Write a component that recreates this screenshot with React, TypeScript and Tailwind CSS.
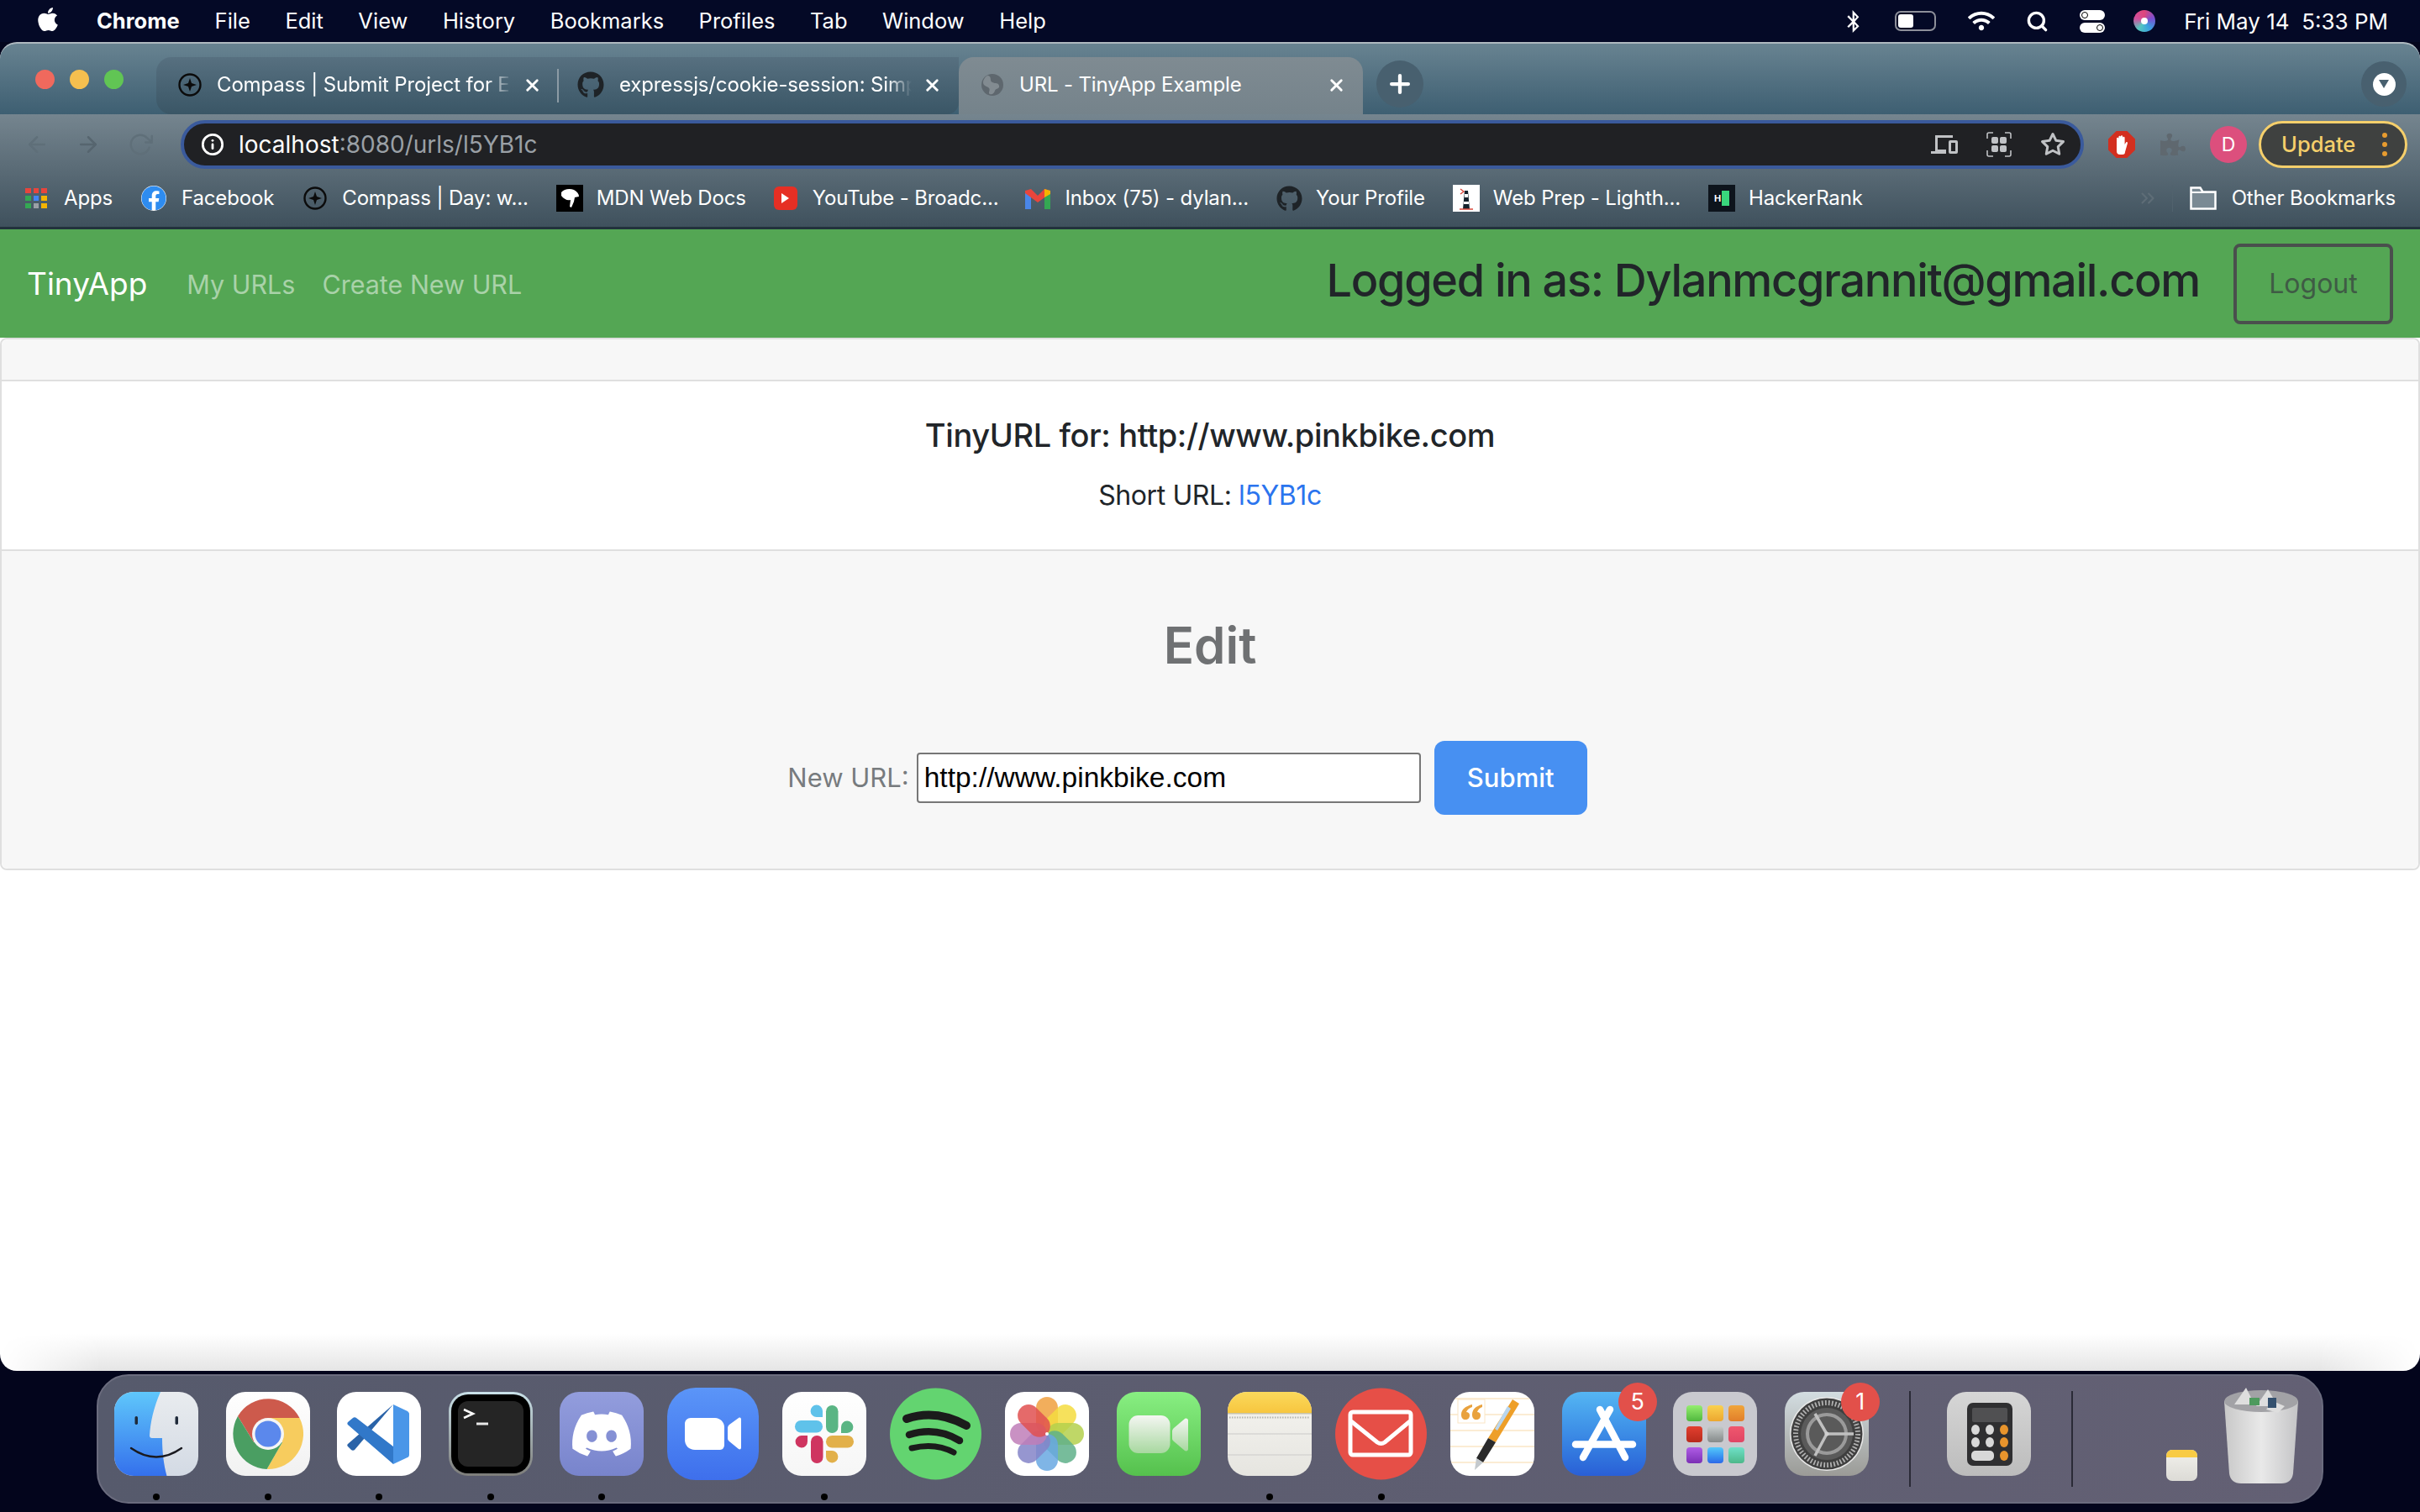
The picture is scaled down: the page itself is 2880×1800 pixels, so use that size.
import React from "react";
import { FaApple, FaDiscord, FaFacebook, FaGithub, FaPuzzlePiece, FaWifi } from "react-icons/fa";
import { FaBluetoothB } from "react-icons/fa";
import { FiSearch, FiX, FiPlus, FiArrowLeft, FiArrowRight, FiRotateCw, FiInfo, FiStar, FiChevronsRight } from "react-icons/fi";

const menuItems = ["File", "Edit", "View", "History", "Bookmarks", "Profiles", "Tab", "Window", "Help"];

const MenuBar = () => (
  <div className="h-[50px] flex items-center justify-between pl-[41px] pr-[38px] bg-[#040926] text-white text-[25.5px]">
    <div className="flex items-center">
      <FaApple size={32} className="mr-[42px] -mt-1" />
      <span className="font-bold mr-[42px]">Chrome</span>
      <div className="flex gap-[41.5px]">
        {menuItems.map((m) => (
          <span key={m}>{m}</span>
        ))}
      </div>
    </div>
    <div className="flex items-center">
      <FaBluetoothB size={27} className="mr-[36px]" />
      <div className="mr-[38px] w-[49px] h-[24px] rounded-[7px] border-2 border-[#8d8f99] p-[2px] flex">
        <div className="w-[18px] bg-white rounded-[3px]" />
      </div>
      <FaWifi size={32} className="mr-[37px]" />
      <FiSearch size={27} strokeWidth={3} className="mr-[37px]" />
      <div className="mr-[34px] w-[30px] flex flex-col gap-[3px]">
        <div className="h-[12px] rounded-full bg-white flex items-center pl-[2px]"><div className="w-[8px] h-[8px] rounded-full border border-black" /></div>
        <div className="h-[12px] rounded-full bg-white flex items-center justify-end pr-[2px]"><div className="w-[8px] h-[8px] rounded-full border border-black" /></div>
      </div>
      <div className="mr-[34px] w-[26px] h-[26px] rounded-full bg-[conic-gradient(#e0457b,#7a4fd0,#3aa0e0,#54c8c0,#d24f9c,#e0457b)] flex items-center justify-center">
        <div className="w-[8px] h-[8px] rounded-full bg-white" />
      </div>
      <span className="whitespace-pre text-[26px]">Fri May 14  5:33 PM</span>
    </div>
  </div>
);

const CompassIcon = ({ size = 28 }: { size?: number }) => (
  <svg width={size} height={size} viewBox="0 0 28 28" className="shrink-0">
    <circle cx="14" cy="14" r="12.5" fill="none" stroke="#0b0b0b" strokeWidth="2.4" />
    <path d="M14 6l2 6 6 2-6 2-2 6-2-6-6-2 6-2z" fill="#0b0b0b" />
  </svg>
);

const Tab = ({ width, icon, title, active, pad = "pl-[26px]", gap = "ml-[18px]" }: { width: string; icon: React.ReactNode; title: string; active?: boolean; pad?: string; gap?: string }) => (
  <div className={`${width} h-full flex items-center ${pad} pr-[20px] pb-[2px] shrink-0 ${active ? "bg-gradient-to-b from-[#7f8b92] to-[#75838b] rounded-t-[18px]" : ""}`}>
    {icon}
    <div className={`${gap} mr-[6px] flex-1 min-w-0 overflow-hidden whitespace-nowrap text-[24px] tracking-[-0.15px] text-white ${active ? "" : "[mask-image:linear-gradient(to_right,black_90%,transparent_98%)]"}`}>
      {title}
    </div>
    <FiX size={23} strokeWidth={3} className="text-white shrink-0" />
  </div>
);

const TabStrip = () => (
  <div className="h-[84px] pt-[16px] flex bg-gradient-to-b from-[#688391] to-[#3e5f72]">
    <div className="w-[186px] h-[52px] flex items-center gap-[18px] pl-[42px]">
      <div className="w-[23px] h-[23px] rounded-full bg-[#f0695d]" />
      <div className="w-[23px] h-[23px] rounded-full bg-[#f5bf4f]" />
      <div className="w-[23px] h-[23px] rounded-full bg-[#61c554]" />
    </div>
    <div className="flex bg-gradient-to-b from-[#577080] to-[#3a5666] rounded-tl-[18px] rounded-bl-[18px] rounded-br-[14px] relative">
      <Tab width="w-[479px]" icon={<CompassIcon />} title="Compass | Submit Project for E" />
      <div className="w-[2px] h-[40px] bg-[#8c9ba5] self-center -ml-[2px]" />
      <Tab width="w-[476px]" pad="pl-[22px]" gap="ml-[18px]" icon={<FaGithub size={32} className="text-[#1e2327] shrink-0" />} title="expressjs/cookie-session: Simp" />
    </div>
    <Tab width="w-[481px]" active icon={<svg width="28" height="28" viewBox="0 0 28 28" className="shrink-0"><circle cx="14" cy="14" r="13" fill="#5e676e" /><path d="M9 3c5 2 1 6 5 8s7 0 8 4-4 3-5 6-3 5-6 4 2-6-2-8-6-3-6-6 3-8 6-8z" fill="#828b91" /></svg>} title="URL - TinyApp Example" />
    <div className="ml-[16px] mt-[4px] w-[56px] h-[56px] rounded-full bg-[#48606f] flex items-center justify-center">
      <FiPlus size={34} strokeWidth={3} className="text-white" />
    </div>
    <div className="ml-auto mr-[16px] mt-[5px] w-[54px] h-[54px] rounded-full bg-[#48606f] flex items-center justify-center">
      <div className="w-[27px] h-[27px] rounded-full bg-white flex items-center justify-center">
        <div className="w-0 h-0 border-l-[6px] border-r-[6px] border-t-[10px] border-l-transparent border-r-transparent border-t-[#48606f]" />
      </div>
    </div>
  </div>
);

const Toolbar = () => (
  <div className="h-[72px] pt-[7px] flex">
    <div className="w-[215px] h-[58px] flex items-center text-[#5f6f79] shrink-0">
      <FiArrowLeft size={30} className="ml-[29px]" />
      <FiArrowRight size={30} className="ml-[31px] text-[#56656f]" />
      <FiRotateCw size={30} className="ml-[32px]" />
    </div>
    <div className="w-[2265px] h-[58px] rounded-full border-[4px] border-[#3a5a9c] bg-[#202124] flex items-center pl-[20px] pr-[18px] text-[28px]">
      <FiInfo size={28} strokeWidth={2.4} className="text-white" />
      <span className="ml-[17px] text-white">localhost</span>
      <span className="text-[#9aa0a6]">:8080/urls/l5YB1c</span>
      <div className="ml-auto flex items-center gap-[34px] text-[#c0c2c5]">
        <svg width="32" height="28" viewBox="0 0 32 28"><path d="M5 3h21v3H8v14h10v5H0v-3h5z" fill="#c0c2c5" /><rect x="21" y="9" width="11" height="16" rx="2" fill="#c0c2c5" /><rect x="24" y="12" width="5" height="10" fill="#202124" /></svg>
        <svg width="30" height="30" viewBox="0 0 30 30" fill="none"><path d="M1 8V3a2 2 0 012-2h5M22 1h5a2 2 0 012 2v5M29 22v5a2 2 0 01-2 2h-5M8 29H3a2 2 0 01-2-2v-5" stroke="#c0c2c5" strokeWidth="1.6" /><rect x="6" y="6" width="8" height="8" rx="2" fill="#c0c2c5" /><rect x="16" y="6" width="8" height="8" rx="2" fill="#c0c2c5" /><rect x="6" y="16" width="8" height="8" rx="2" fill="#c0c2c5" /><rect x="16" y="16" width="8" height="8" rx="2" fill="#c0c2c5" /></svg>
        <FiStar size={30} strokeWidth={2.4} />
      </div>
    </div>
    <div className="flex items-center h-[58px] ml-[29px]">
      <div className="w-[32px] h-[32px] bg-[#d32f1f] [clip-path:polygon(30%_0,70%_0,100%_30%,100%_70%,70%_100%,30%_100%,0_70%,0_30%)] flex items-center justify-center">
        <svg width="18" height="24" viewBox="0 0 18 24"><path d="M3 12V5a1.2 1.2 0 012.4 0V3a1.2 1.2 0 012.4 0v-.5a1.2 1.2 0 012.4 0V4a1.2 1.2 0 012.4 0v8l1.5-2.5c1-1 2.4 0 1.8 1.2L13 21a3 3 0 01-3 3H7a4 4 0 01-4-4z" fill="#fff" /></svg>
      </div>
      <FaPuzzlePiece size={30} className="ml-[30px] text-[#5f686f]" />
      <div className="ml-[29px] w-[44px] h-[44px] rounded-full bg-[#dc4f7d] text-white text-[23px] flex items-center justify-center">D</div>
      <div className="ml-[14px] w-[177px] h-[56px] rounded-full border-[3px] border-[#f5cf6b] bg-[#3f4140] flex items-center pl-[24px] pr-[21px] text-[#f5cf6b] text-[25.5px] font-medium">
        Update
        <div className="ml-auto flex flex-col gap-[5px]">
          <div className="w-[6px] h-[6px] rounded-full bg-[#e89c2f]" />
          <div className="w-[6px] h-[6px] rounded-full bg-[#e89c2f]" />
          <div className="w-[6px] h-[6px] rounded-full bg-[#e89c2f]" />
        </div>
      </div>
    </div>
  </div>
);

const bookmarkIcon = {
  apps: (
    <div className="grid grid-cols-3 gap-[3px] w-[26px]">
      {["#e8453c", "#e8453c", "#e8453c", "#34a853", "#4285f4", "#f5b400", "#34a853", "#9aa0a6", "#f5b400"].map((c, i) => (
        <div key={i} className="h-[6px]" style={{ backgroundColor: c }} />
      ))}
    </div>
  ),
  facebook: <FaFacebook size={30} className="text-[#2e8cf0] bg-white rounded-full" />,
  mdn: (
    <div className="w-[32px] h-[32px] bg-black flex items-center justify-center">
      <svg width="24" height="26" viewBox="0 0 24 26"><path d="M2 6c3-4 10-5 15-3 4 2 6 5 6 8l-5 1-1 5-3 7-2-1 1-8c-4 1-8-1-11-5z" fill="#fff" /></svg>
    </div>
  ),
  youtube: (
    <div className="w-[28px] h-[28px] rounded-[6px] bg-[#e62f24] flex items-center justify-center">
      <div className="w-0 h-0 border-y-[6px] border-l-[9px] border-y-transparent border-l-white" />
    </div>
  ),
  gmail: (
    <svg width="30" height="26" viewBox="0 0 30 26"><path d="M0 4v22h7V11z" fill="#4a86e8" /><path d="M30 4v22h-7V11z" fill="#34a853" /><path d="M0 4l7-2 8 8 8-8 7 2v3L15 18 0 7z" fill="#e8453c" /><path d="M23 2l7 2v4l-7 4z" fill="#f5b400" /></svg>
  ),
  github: <FaGithub size={31} className="text-[#1e2327]" />,
  lighthouse: (
    <div className="w-[32px] h-[32px] bg-white flex items-center justify-center">
      <svg width="16" height="30" viewBox="0 0 16 30"><path d="M6 6h4l2 22H4z" fill="#15222c" /><path d="M6 10h4v4H6zM5 19h6v3H5z" fill="#fff" /><path d="M1 4l4 3-4 3M0 28h16" stroke="#d9483b" strokeWidth="1.4" fill="none" /></svg>
    </div>
  ),
  hacker: (
    <div className="w-[32px] h-[32px] bg-[#0d141c] flex items-center justify-center gap-[1px]">
      <span className="text-white text-[11px] font-bold leading-none">H</span>
      <div className="w-[9px] h-[18px] bg-[#39d67c]" />
    </div>
  ),
};

const Bookmark = ({ icon, label, iconBox, gap, ml }: { icon: React.ReactNode; label: string; iconBox: string; gap: string; ml: string }) => (
  <div className={`flex items-center shrink-0 ${ml}`}>
    <div className={`${iconBox} flex items-center justify-center`}>{icon}</div>
    <span className={`${gap} text-white text-[24px] tracking-[-0.15px] whitespace-nowrap`}>{label}</span>
  </div>
);

const BookmarksBar = () => (
  <div className="h-[65px] flex items-center border-b-[3px] border-[#22323c] pb-[6px]">
    <div className="flex items-center pl-[30px] flex-1">
      <Bookmark ml="" iconBox="w-[26px]" gap="ml-[20px]" icon={bookmarkIcon.apps} label="Apps" />
      <Bookmark ml="ml-[34px]" iconBox="w-[30px]" gap="ml-[18px]" icon={bookmarkIcon.facebook} label="Facebook" />
      <Bookmark ml="ml-[35px]" iconBox="w-[28px]" gap="ml-[18px]" icon={<CompassIcon />} label="Compass | Day: w..." />
      <Bookmark ml="ml-[33px]" iconBox="w-[32px]" gap="ml-[16px]" icon={bookmarkIcon.mdn} label="MDN Web Docs" />
      <Bookmark ml="ml-[33px]" iconBox="w-[28px]" gap="ml-[18px]" icon={bookmarkIcon.youtube} label="YouTube - Broadc..." />
      <Bookmark ml="ml-[32px]" iconBox="w-[30px]" gap="ml-[17px]" icon={bookmarkIcon.gmail} label="Inbox (75) - dylan..." />
      <Bookmark ml="ml-[33px]" iconBox="w-[31px]" gap="ml-[16px]" icon={bookmarkIcon.github} label="Your Profile" />
      <Bookmark ml="ml-[33px]" iconBox="w-[32px]" gap="ml-[16px]" icon={bookmarkIcon.lighthouse} label="Web Prep - Lighth..." />
      <Bookmark ml="ml-[33px]" iconBox="w-[32px]" gap="ml-[16px]" icon={bookmarkIcon.hacker} label="HackerRank" />
    </div>
    <FiChevronsRight size={26} className="text-[#5e6d77] mr-[16px]" />
    <div className="w-[1px] h-[32px] bg-[#51626d] mr-[20px]" />
    <svg width="32" height="28" viewBox="0 0 32 28" className="mr-[18px]"><path d="M1.5 26.5V1.5h11l3 5h15v20z" fill="#7a8a94" stroke="#fff" strokeWidth="2.5" /><path d="M2 7h28" stroke="#fff" strokeWidth="2" /></svg>
    <span className="text-white text-[24px] tracking-[-0.15px] mr-[29px] whitespace-nowrap">Other Bookmarks</span>
  </div>
);

const SiteNav = () => (
  <nav className="h-[129px] bg-[#54a654] flex items-center pl-[32px] pr-[32px] shrink-0">
    <span className="text-white text-[37px]">TinyApp</span>
    <span className="ml-[47px] mt-[2px] text-[30.5px] text-[#a9d2a9]">My URLs</span>
    <span className="ml-[32px] mt-[2px] text-[30.5px] text-[#a9d2a9]">Create New URL</span>
    <span className="ml-auto text-[54px] tracking-[-1.3px] font-medium text-[#212529] -mt-[8px]">Logged in as: Dylanmcgrannit@gmail.com</span>
    <button className="ml-[40px] w-[190px] h-[96px] rounded-[8px] border-[4px] border-[#4a4f4d] text-[32px] text-[#3f5b45] flex items-center justify-center">Logout</button>
  </nav>
);

const UrlCard = () => (
  <div className="rounded-[8px] border-2 border-[#dfdfdf] bg-white shrink-0">
    <div className="h-[50px] bg-[#f7f7f7] border-b-2 border-[#dfdfdf] rounded-t-[8px]" />
    <div className="h-[202px] flex flex-col items-center border-b-2 border-[#dfdfdf]">
      <h5 className="mt-[40px] text-[38px] tracking-[-0.4px] leading-[48px] font-medium text-[#212529]">TinyURL for: http://www.pinkbike.com</h5>
      <p className="mt-[24px] text-[32px] tracking-[-0.4px] leading-[48px] text-[#212529]">
        Short URL: <a className="text-[#2b74ee]">l5YB1c</a>
      </p>
    </div>
    <div className="h-[378px] bg-[#f7f7f7] flex flex-col items-center rounded-b-[8px]">
      <h3 className="mt-[76px] text-[60px] leading-[72px] font-semibold text-[#6f7173]">Edit</h3>
      <div className="mt-[78px] pr-[54px] flex items-center">
        <label className="text-[31px] text-[#777b7e]">New URL:</label>
        <input readOnly value="http://www.pinkbike.com" className="ml-[9px] w-[600px] h-[60px] rounded-[4px] border-2 border-[#767676] bg-white px-[7px] text-[33.5px] text-black [font-family:'Liberation_Sans',Arial,sans-serif]" />
        <button className="ml-[16px] w-[182px] h-[88px] rounded-[12px] bg-[#4790f2] text-white text-[31px] font-medium">Submit</button>
      </div>
    </div>
  </div>
);

const Box = ({ children, className = "" }: { children: React.ReactNode; className?: string }) => (
  <div className={`w-[100px] h-[100px] rounded-[23px] overflow-hidden flex items-center justify-center ${className}`}>{children}</div>
);

const Svg = ({ children, size = 100 }: { children: React.ReactNode; size?: number }) => (
  <svg width={size} height={size} viewBox={`0 0 ${size} ${size}`} className="block">{children}</svg>
);

const Finder = () => (
  <Box className="bg-gradient-to-b from-[#e9ecef] to-[#d3dae4]">
    <Svg>
      <defs><linearGradient id="fb" x1="0" y1="0" x2="0" y2="1"><stop offset="0" stopColor="#5fc7fb" /><stop offset="1" stopColor="#3470ec" /></linearGradient></defs>
      <path d="M0 0h55C47 18 43 36 42 52c0 2 1 3 3 3h12c0 17 2 32 5.500 45H0z" fill="url(#fb)" />
      <rect x="24.500" y="29" width="3.500" height="10" rx="1.700" fill="#1f2a3a" />
      <rect x="72.500" y="29" width="3.500" height="10" rx="1.700" fill="#1f2a3a" />
      <path d="M20 67Q50 88 80 67" fill="none" stroke="#1a1a1f" strokeWidth="2.400" strokeLinecap="round" />
    </Svg>
  </Box>
);

const Chrome = () => (
  <Box className="bg-gradient-to-b from-white to-[#f1f1f1]">
    <Svg>
      <path d="M14 29A42 42 0 0 1 87.500 31H50L33 60z" fill="#cd5a4c" />
      <path d="M87.500 31A42 42 0 0 1 48.600 92L67 60 50 31z" fill="#f7cc5e" />
      <path d="M48.600 92A42 42 0 0 1 14 29L33 60 67 60z" fill="#4a9e62" />
      <circle cx="50" cy="50" r="19" fill="#f5f5f5" />
      <circle cx="50" cy="50" r="15.500" fill="#5b88ec" />
    </Svg>
  </Box>
);

const VsCode = () => (
  <Box className="bg-white">
    <Svg>
      <path d="M67 15 21 69c-1 1-3 1-4 0l-4-4c-1-1-1-2 0-3z" fill="#2a63a8" />
      <path d="M19 31c1-1 3-1 4 0l44 34v21L14 40c-2-1-2-3-1-4z" fill="#3178c9" />
      <path d="M67 15l17 8c1 1 2 2 2 3v49c0 1-1 3-2 3l-17 8z" fill="#4a96e8" />
    </Svg>
  </Box>
);

const Terminal = () => (
  <Box className="bg-gradient-to-b from-[#c8e0e8] to-[#7d7d7a] p-[3px]">
    <div className="w-full h-full rounded-[20px] bg-black p-[8px]">
      <div className="w-full h-full rounded-[12px] bg-[#252525] relative">
        <svg width="40" height="40" viewBox="0 0 40 40" className="absolute left-[4px] top-[2px]">
          <path d="M3 8l11 5-11 5" fill="none" stroke="#fff" strokeWidth="2.500" />
          <path d="M18 25h14" stroke="#e8e8e8" strokeWidth="3" />
        </svg>
      </div>
    </div>
  </Box>
);

const Discord = () => (
  <Box className="bg-gradient-to-b from-[#939ddd] to-[#7884cc]">
    <FaDiscord size={76} className="text-white" />
  </Box>
);

const Zoom = () => (
  <div className="w-[109px] h-[110px] rounded-[34px] bg-gradient-to-b from-[#5b95f8] to-[#3e6fec] flex items-center justify-center">
    <svg width="109" height="110" viewBox="0 0 109 110">
      <path d="M21 43c0-4 3-7 7-7h29c6 0 11 5 11 11v21c0 3-2 6-5 6H33c-7 0-12-5-12-12z" fill="#fff" />
      <path d="M72 48c0-2 1-3 2-4l11-8c2-1 3 0 3 2v33c0 2-1 3-3 2l-11-9c-1-1-2-2-2-4z" fill="#fff" />
    </svg>
  </div>
);

const Slack = () => (
  <Box className="bg-gradient-to-b from-white to-[#f6f6f6]">
    <Svg>
      <rect x="15" y="34" width="33" height="14.500" rx="7.200" fill="#5fc2ea" />
      <path d="M48 30h-7a7.200 7.200 0 1 1 7-7.200z" fill="#5fc2ea" />
      <rect x="52" y="16" width="14.500" height="33" rx="7.200" fill="#5ab584" />
      <path d="M70 49v-7a7.200 7.200 0 1 1 7.200 7z" fill="#5ab584" />
      <rect x="34" y="52" width="14.500" height="33" rx="7.200" fill="#cf3560" />
      <path d="M30 52v7a7.200 7.200 0 1 1-7.200-7z" fill="#cf3560" />
      <rect x="52" y="52" width="33" height="14.500" rx="7.200" fill="#e2b04a" />
      <path d="M52 70h7a7.200 7.200 0 1 1-7 7.200z" fill="#e2b04a" />
    </Svg>
  </Box>
);

const Spotify = () => (
  <svg width="109" height="110" viewBox="0 0 109 110" className="block">
    <circle cx="54.500" cy="55" r="54.500" fill="#63d470" />
    <path d="M20 37Q55 25 91 45" fill="none" stroke="#1b1b1b" strokeWidth="10" strokeLinecap="round" />
    <path d="M23 56Q55 46 83 63" fill="none" stroke="#1b1b1b" strokeWidth="8.500" strokeLinecap="round" />
    <path d="M26 72Q54 65 76 77" fill="none" stroke="#1b1b1b" strokeWidth="7" strokeLinecap="round" />
  </svg>
);

const petals = [
  { a: 0, c: "#f0a040" }, { a: 45, c: "#f4dc40" }, { a: 90, c: "#b4d04c" }, { a: 135, c: "#5fb08a" },
  { a: 180, c: "#68a8e2" }, { a: 225, c: "#8484c8" }, { a: 270, c: "#c07eb8" }, { a: 315, c: "#e05050" },
];

const Photos = () => (
  <Box className="bg-white">
    <Svg>
      {petals.map((p) => (
        <rect key={p.a} x="37" y="6" width="26" height="44" rx="13" fill={p.c} opacity="0.85" transform={`rotate(${p.a} 50 50)`} />
      ))}
      <circle cx="50" cy="50" r="2" fill="#fff" />
    </Svg>
  </Box>
);

const FaceTime = () => (
  <Box className="bg-gradient-to-b from-[#88ef82] to-[#55c14d]">
    <Svg>
      <defs><linearGradient id="ft" x1="0" y1="0" x2="0" y2="1"><stop offset="0" stopColor="#f4f6f2" /><stop offset="1" stopColor="#a8d8a0" /></linearGradient></defs>
      <rect x="14.500" y="28" width="49" height="45" rx="11" fill="url(#ft)" />
      <path d="M66 47c0-2 1-3 2-4l13-11c2-1 4 0 4 2v34c0 2-2 3-4 2L68 59c-1-1-2-2-2-3z" fill="url(#ft)" />
    </Svg>
  </Box>
);

const Notes = () => (
  <Box className="bg-gradient-to-b from-[#f5f4f0] to-[#e6e5e0]">
    <Svg>
      <defs><linearGradient id="nt" x1="0" y1="0" x2="0" y2="1"><stop offset="0" stopColor="#fbd95c" /><stop offset="1" stopColor="#f7c63f" /></linearGradient></defs>
      <rect width="100" height="25" fill="url(#nt)" />
      <rect y="25" width="100" height="1.500" fill="#c8c2a8" />
      <path d="M2 30.500H98" stroke="#b5b5b0" strokeWidth="2" strokeDasharray="1.500 1.500" />
      <path d="M0 50H100M0 75H100" stroke="#d6d5d2" strokeWidth="1.500" />
    </Svg>
  </Box>
);

const Mail = () => (
  <svg width="109" height="110" viewBox="0 0 109 110" className="block">
    <circle cx="54.500" cy="55" r="54.500" fill="#e64f47" />
    <rect x="18" y="29" width="72" height="51" rx="3" fill="none" stroke="#fff" strokeWidth="5" />
    <path d="M19 40l31 25c3 2 6 2 9 0l30-25" fill="none" stroke="#fff" strokeWidth="5" />
  </svg>
);

const Pages = () => (
  <Box className="bg-white">
    <Svg>
      <path d="M0 8H100M0 27H100M0 46H100M0 65H100M0 84H100" stroke="#fae6c6" strokeWidth="1.500" />
      <rect x="9" y="9" width="32" height="28" fill="#fff" stroke="#fae6c6" />
      <path d="M26 15c-8 2-13 6-13 12 0 4 2 6 5 6s5-2 5-5-2-4-4-4c1-3 4-5 7-6zM38 15c-8 2-12 6-12 12 0 4 2 6 5 6s5-2 5-5-2-4-4-4c1-3 3-5 6-6z" fill="#e9a23e" />
      <path d="M74 9 82 14 54 60 45 55z" fill="#ee9f28" />
      <path d="M68 17 72 20 56 46 53 44z" fill="#b9d6ee" />
      <path d="M45 55 54 60 39 84 31 79z" fill="#2a2a2a" />
      <path d="M31 79 39 84 29 93z" fill="#c4c9cd" />
    </Svg>
  </Box>
);

const AppStore = () => (
  <Box className="bg-gradient-to-b from-[#55b6f3] to-[#2a5fd6]">
    <Svg>
      <path d="M45 21 75 78M57 21 25 78M16 62.500H84" stroke="#fff" strokeWidth="8.500" strokeLinecap="round" fill="none" />
    </Svg>
  </Box>
);

const launchpadColors = [
  "bg-gradient-to-b from-[#95ee6f] to-[#4fb83e]", "bg-gradient-to-b from-[#fad14f] to-[#eca72f]", "bg-gradient-to-b from-[#f0a53b] to-[#e17e2a]",
  "bg-gradient-to-b from-[#e33f2f] to-[#b82a1c]", "bg-gradient-to-b from-[#c6cbcb] to-[#858a8a]", "bg-gradient-to-b from-[#f0576e] to-[#e04564]",
  "bg-gradient-to-b from-[#b05ce6] to-[#7b2fb5]", "bg-gradient-to-b from-[#55c8fa] to-[#2e68e8]", "bg-gradient-to-b from-[#6fe0c8] to-[#4db88a]",
];

const Launchpad = () => (
  <Box className="bg-[#c9c9cf]">
    <div className="grid grid-cols-3 gap-[6px]">
      {launchpadColors.map((c) => (
        <div key={c} className={`w-[19px] h-[19px] rounded-[4px] ${c}`} />
      ))}
    </div>
  </Box>
);

const SystemPrefs = () => (
  <Box className="bg-gradient-to-b from-[#d3dde1] to-[#9b9b97]">
    <Svg>
      <circle cx="50" cy="50" r="44" fill="#e8e8e8" />
      <circle cx="50" cy="50" r="42.500" fill="#3f3f3f" />
      <circle cx="50" cy="50" r="37" fill="none" stroke="#b0b0b0" strokeWidth="6" strokeDasharray="1.800 2.200" />
      <circle cx="50" cy="50" r="31" fill="#5a5a5a" />
      <circle cx="50" cy="50" r="23" fill="#5a5a5a" stroke="#9a9a9a" strokeWidth="4" />
      <path d="M50 50 36 26M50 50H82M50 50 36 76" stroke="#c0c0c0" strokeWidth="3.500" fill="none" />
      <circle cx="50" cy="50" r="2.500" fill="#d0d0d0" />
    </Svg>
  </Box>
);

const Calculator = () => (
  <Box className="bg-gradient-to-b from-[#d6d6d6] to-[#bcbcbc]">
    <Svg>
      <rect x="24" y="13" width="54" height="75" rx="7" fill="#2f2f31" />
      <rect x="30" y="19" width="42" height="17" rx="2" fill="#505052" />
      {[45, 60].map((y) => (
        <g key={y}>
          <ellipse cx="34" cy={y} rx="5" ry="6" fill="#d8d8d8" />
          <ellipse cx="51" cy={y} rx="5" ry="6" fill="#d8d8d8" />
          <ellipse cx="68" cy={y} rx="5" ry="6" fill="#e8942c" />
        </g>
      ))}
      <rect x="29" y="70" width="27" height="12" rx="5" fill="#d8d8d8" />
      <ellipse cx="68" cy="76" rx="5" ry="6" fill="#e8942c" />
    </Svg>
  </Box>
);

const Trash = () => (
  <svg width="88" height="116" viewBox="0 0 88 116" className="block">
    <defs><linearGradient id="tr" x1="0" y1="0" x2="1" y2="0"><stop offset="0" stopColor="#c8c8c8" /><stop offset="0.5" stopColor="#e9e9e9" /><stop offset="1" stopColor="#c4c4c6" /></linearGradient></defs>
    <path d="M0 18h88l-6 86c-1 8-6 12-14 12H20c-8 0-13-4-14-12z" fill="url(#tr)" />
    <ellipse cx="44" cy="18" rx="44" ry="13" fill="#a2a2a6" />
    <path d="M12 22 26 2l10 20zM38 24 52 4l12 20zM50 28l8-10 14 6-8 8z" fill="#dedede" />
    <rect x="30" y="14" width="12" height="9" fill="#4e9a5e" />
    <rect x="52" y="14" width="10" height="12" fill="#34506e" />
  </svg>
);

type DockApp = { key: string; node: React.ReactNode; dot?: boolean; badge?: string };

const dockApps: DockApp[] = [
  { key: "finder", node: <Finder />, dot: true },
  { key: "chrome", node: <Chrome />, dot: true },
  { key: "vscode", node: <VsCode />, dot: true },
  { key: "terminal", node: <Terminal />, dot: true },
  { key: "discord", node: <Discord />, dot: true },
  { key: "zoom", node: <Zoom /> },
  { key: "slack", node: <Slack />, dot: true },
  { key: "spotify", node: <Spotify /> },
  { key: "photos", node: <Photos /> },
  { key: "facetime", node: <FaceTime /> },
  { key: "notes", node: <Notes />, dot: true },
  { key: "mail", node: <Mail />, dot: true },
  { key: "pages", node: <Pages /> },
  { key: "appstore", node: <AppStore />, badge: "5" },
  { key: "launchpad", node: <Launchpad /> },
  { key: "prefs", node: <SystemPrefs />, badge: "1" },
];

const DockSlot = ({ app }: { app: DockApp }) => (
  <div className="w-[132.5px] h-[150px] relative flex justify-center items-center pb-[16px] shrink-0">
    <div className="relative">
      {app.node}
      {app.badge && (
        <div className="absolute left-[67px] -top-[11px] w-[46px] h-[46px] rounded-full bg-[#e2504a] text-white text-[27px] flex items-center justify-center">
          {app.badge}
        </div>
      )}
    </div>
    {app.dot && <div className="absolute left-1/2 -translate-x-1/2 bottom-[4px] w-[8px] h-[8px] rounded-full bg-black" />}
  </div>
);

const Dock = () => (
  <div className="mt-[4px] mx-[115px] h-[154px] rounded-[38px] border-2 border-[#6b6c7e] bg-gradient-to-r from-[#565a6c] to-[#636074] flex items-start pl-[3px] pt-[2px]">
    {dockApps.map((a) => (
      <DockSlot key={a.key} app={a} />
    ))}
    <div className="ml-[32px] mt-[16px] w-[2px] h-[114px] bg-[#2a2a36] shrink-0" />
    <div className="ml-[27px] shrink-0">
      <DockSlot app={{ key: "calc", node: <Calculator /> }} />
    </div>
    <div className="ml-[31px] mt-[16px] w-[2px] h-[114px] bg-[#2a2a36] shrink-0" />
    <div className="ml-[111px] mt-[86px] w-[37px] h-[37px] rounded-[7px] overflow-hidden bg-gradient-to-b from-[#f2f1ec] to-[#dcdbd6] shrink-0">
      <div className="h-[9px] bg-[#f8cb44]" />
    </div>
    <div className="ml-[32px] mt-[10px] shrink-0">
      <Trash />
    </div>
  </div>
);

export default function App() {
  return (
    <div className="w-[2880px] h-[1800px] overflow-hidden bg-[#03051c] [font-family:Inter,sans-serif]">
      <MenuBar />
      <div className="h-[1582px] rounded-[20px] overflow-hidden flex flex-col bg-white border-t-2 border-[#aeb9c0]">
        <TabStrip />
        <div className="bg-gradient-to-b from-[#75858f] to-[#3e505c]">
          <Toolbar />
          <BookmarksBar />
        </div>
        <SiteNav />
        <UrlCard />
        <div className="flex-1" />
        <div className="h-[44px] bg-gradient-to-b from-white to-[#e5e5e5] [mask-image:linear-gradient(to_right,transparent,black_120px,black_2760px,transparent)]" />
      </div>
      <Dock />
    </div>
  );
}
